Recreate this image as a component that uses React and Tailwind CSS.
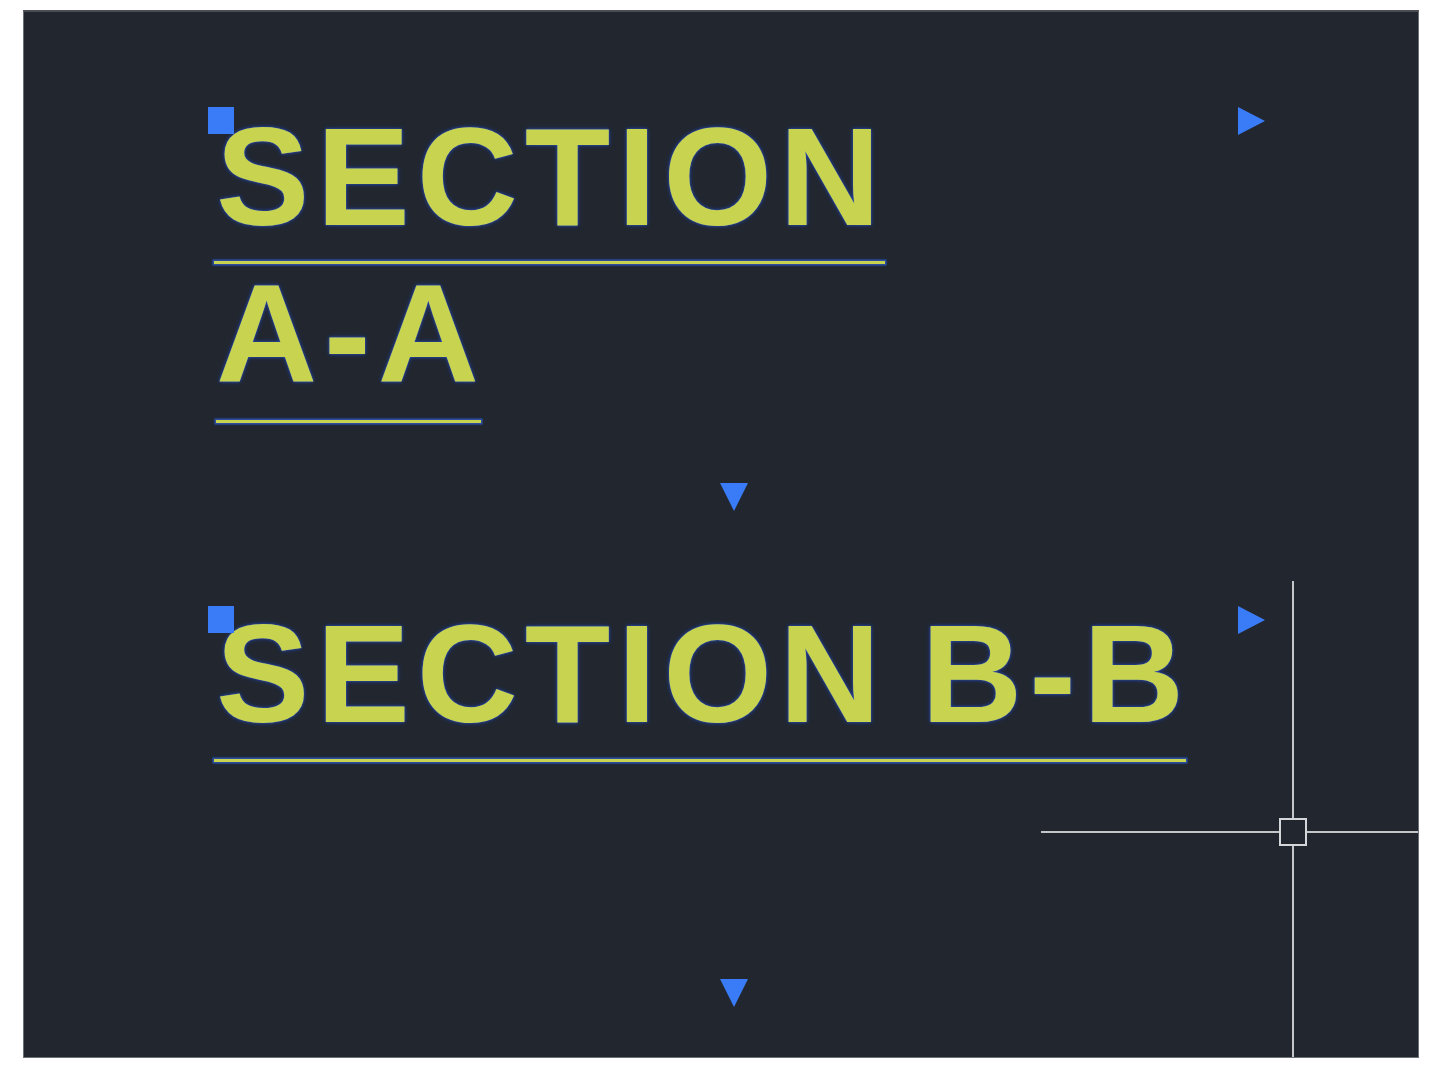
import React from 'react';

const textColor = '#c8d44f';

// one line of mtext with its underline
const MLine = ({ children, lineClass }) => (
    <div className="inline-flex flex-col">
        <span
            className="block text-[140px] leading-[140px] font-bold tracking-[7px] [word-spacing:-12px] whitespace-nowrap [text-shadow:0_0_1px_#3a5cc8,0_0_3px_#2a4aa8,0_0_5px_#1f3780]"
            style={{ fontFamily: '"Liberation Sans", Arial, sans-serif', color: textColor }}
        >
            {children}
        </span>
        <div className={`${lineClass} h-[3px] bg-[#c8d44f] [box-shadow:0_0_0_1.5px_#2c4c9c,0_0_3px_1px_#23408f]`} />
    </div>
);

// grips drawn on a selected mtext frame
const Grips = () => (
    <>
        <div className="absolute -left-[13px] -top-[14px] w-[26px] h-[27px] bg-[#3a7bf7]" />
        <svg className="absolute -right-[15px] -top-[15px]" width="30" height="30" viewBox="0 0 30 30">
            <polygon points="2,1 29,15 2,29" fill="#3a7bf7" />
        </svg>
        <svg className="absolute left-[498px] -bottom-[15px]" width="30" height="30" viewBox="0 0 30 30">
            <polygon points="1,1 29,1 15,29" fill="#3a7bf7" />
        </svg>
    </>
);

const Crosshair = () => (
    <div className="absolute inset-0 pointer-events-none">
        <div className="absolute left-[1268px] top-[569px] bottom-0 w-[2px] bg-[#c4c6ca]" />
        <div className="absolute left-[1017px] right-0 top-[819px] h-[2px] bg-[#c4c6ca]" />
        <div className="absolute left-[1255px] top-[806px] w-[28px] h-[28px] border-2 border-[#d4d6da] bg-[#22272f]" />
    </div>
);

export default function App() {
    return (
        <div className="w-[1440px] h-[1071px] bg-white pt-[10px] pl-[23px]">
            <div className="relative w-[1396px] h-[1048px] bg-[#22272f] border border-[#6b7076] border-t-2 border-t-[#4a4e54] overflow-hidden pl-[197px] pt-[109px] flex flex-col">
                <div className="relative w-[1030px] h-[376px] flex flex-col">
                    <Grips />
                    <div className="flex flex-col -mt-[14px] -ml-[5px] items-start">
                        <MLine lineClass="mt-[14px] -ml-[2px] mr-[2px]">SECTION</MLine>
                        <MLine lineClass="mt-[16px] ml-[0px] mr-[5px]">A-A</MLine>
                    </div>
                </div>
                <div className="relative w-[1030px] h-[373px] mt-[123px] flex flex-col">
                    <Grips />
                    <div className="flex flex-col -mt-[16px] -ml-[5px] items-start">
                        <MLine lineClass="mt-[15px] -ml-[2px] mr-[5px]">SECTION B-B</MLine>
                    </div>
                </div>
                <Crosshair />
            </div>
        </div>
    );
}
